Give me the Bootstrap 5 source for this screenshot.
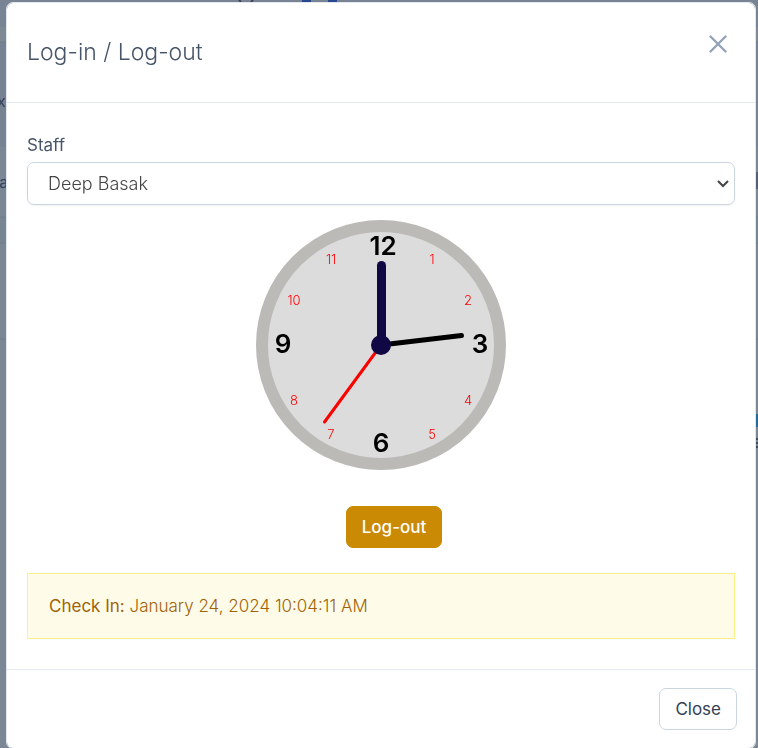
<!DOCTYPE html>
<html lang="en">
<head>
<meta charset="utf-8">
<meta name="viewport" content="width=device-width, initial-scale=1">
<title>Log-in / Log-out</title>
<link href="https://cdn.jsdelivr.net/npm/bootstrap@5.3.0/dist/css/bootstrap.min.css" rel="stylesheet">
<style>
body { font: 400 17px/24px Inter, "Liberation Sans", sans-serif; color: #475569; background: #7c8795; }
.backdrop-page { position: fixed; inset: 0; width: 100%; height: 100%; font-size: 16px; }
.modal { padding: 2px 2px 0 6px; }
.modal::-webkit-scrollbar { display: none; }
.modal-dialog { max-width: none; margin: 0; }
.modal-content { border: 1px solid #e2e8f0; border-radius: 7px; color: inherit; }
.modal-header { padding: 20px 19px 22px 20px; min-height: 100px; border-color: #e2e8f0; }
.modal-title { font-size: 23px; line-height: 32px; font-weight: 300; }
.modal-body { padding: 30px 20px; }
.modal-footer { padding: 18px; border-color: #e2e8f0; }
.close-x { width: 36px; height: 42px; color: #94a3b8; }
.staff-label { font-weight: 400; margin-bottom: 5px; }
.staff-select { height: 43px; padding: 0 30px 0 20px; border: 1px solid #cbd5e1; border-radius: 7px; appearance: none; background: #fff url("data:image/svg+xml,%3Csvg xmlns='http://www.w3.org/2000/svg' width='12' height='8' fill='none' stroke='%23444' stroke-width='2'%3E%3Cpath d='M1 1l5 5 5-5'/%3E%3C/svg%3E") no-repeat right 5px center; color: #444; font-size: 18px; font-weight: 300; box-shadow: 0 1px 2px rgba(0,0,0,.05); }
.clock-face { width: 250px; height: 250px; margin: 15px auto 36px; }
.hour-main { font-size: 26px; font-weight: 600; fill: #000; }
.hour-minor { font-size: 13px; font-weight: 300; fill: #f00; }
.btn-action { height: 42px; padding: 7px 15px 5px; font-size: 17px; border-radius: 7px; }
.btn-logout, .btn-logout:hover { background: #ca8a04; border-color: #ca8a04; color: #fff; font-weight: 500; }
.btn-close-modal { border-color: #cbd5e1; color: #334155; background: #fff; font-weight: 400; }
.logout-row { margin-bottom: 25px; padding-left: 26px; }
.check-note { padding: 20px 21px; border: 1px solid #fef08a; border-radius: 0; background: #fefce8; color: #a16207; font-weight: 300; }
.check-note strong { font-weight: 400; }
</style>
</head>
<body>
<svg class="backdrop-page" aria-hidden="true">
  <rect width="100%" height="27" fill="#788393"/>
  <rect y="27" width="100%" height="15" fill="#7e8993"/>
  <rect y="42" width="100%" height="105" fill="#778293"/>
  <rect y="217" width="100%" height="26" fill="#788593"/>
  <path d="M0 42h758M0 217h758M0 243h758M0 339h758" stroke="#717d8b"/>
  <path d="M239 0l2 2M253 0l-2 2" stroke="#3c4658" stroke-width="2"/>
  <path d="M302 0h9v2h-9zM328 0h9v2h-9z" fill="#27478e"/>
  <text x="-3" y="107" fill="#35425a">xy</text>
  <text x="-10" y="188" fill="#35425a">Ta</text>
  <svg x="100%" width="2" height="100%" overflow="visible">
    <rect x="-2" y="172" width="2" height="17" fill="#556078"/>
    <rect x="-2" y="414" width="2" height="13" fill="#286b99"/>
    <path d="M-1 438v12" stroke="#3f4a5b" stroke-width="2" stroke-dasharray="2 2"/>
  </svg>
</svg>
<div class="modal d-block" role="dialog" aria-labelledby="modalTitle">
  <div class="modal-dialog">
    <div class="modal-content">
      <div class="modal-header align-items-center">
        <h1 class="modal-title" id="modalTitle">Log-in / Log-out</h1>
        <button type="button" class="close-x btn border-0 p-0 align-self-start d-flex align-items-center justify-content-center" aria-label="Dismiss">
          <svg width="18" height="18" fill="none" stroke="currentColor" stroke-width="2.4" stroke-linecap="round"><path d="M1.500 1.500l15 15M16.500 1.500l-15 15"/></svg>
        </button>
      </div>
      <div class="modal-body">
        <label class="staff-label d-block" for="staff">Staff</label>
        <select class="staff-select w-100 d-block" id="staff"><option>Deep Basak</option></select>
        <svg class="clock-face d-block" viewBox="0 0 250 250" role="img" aria-label="Analog clock">
          <circle cx="125" cy="125" r="119" fill="#dcdcdc" stroke="#bbbab6" stroke-width="12"/>
          <g class="hour-main" text-anchor="middle">
            <text x="127" y="35">12</text><text x="224" y="133">3</text><text x="125" y="232">6</text><text x="27" y="133">9</text>
          </g>
          <g class="hour-minor" text-anchor="middle">
            <text x="176" y="44">1</text><text x="212" y="85">2</text><text x="212" y="185">4</text><text x="176" y="219">5</text>
            <text x="75" y="219">7</text><text x="38" y="185">8</text><text x="38" y="85">10</text><text x="75" y="44">11</text>
          </g>
          <g stroke-linecap="round">
            <path d="M125 125L205.500 115.500" stroke="#000" stroke-width="5"/>
            <path d="M125 125L68.500 202" stroke="#f00" stroke-width="3"/>
            <path d="M125.500 125V45.500" stroke="#0f0844" stroke-width="9"/>
          </g>
          <circle cx="125" cy="125" r="10" fill="#0f0844"/>
        </svg>
        <div class="logout-row d-flex justify-content-center">
          <button type="button" class="btn btn-action btn-logout">Log-out</button>
        </div>
        <div class="alert check-note mb-0"><strong>Check In:</strong> January 24, 2024 10:04:11 AM</div>
      </div>
      <div class="modal-footer">
        <button type="button" class="btn btn-action btn-close-modal m-0">Close</button>
      </div>
    </div>
  </div>
</div>
<script src="https://cdn.jsdelivr.net/npm/bootstrap@5.3.0/dist/js/bootstrap.bundle.min.js"></script>
</body>
</html>
